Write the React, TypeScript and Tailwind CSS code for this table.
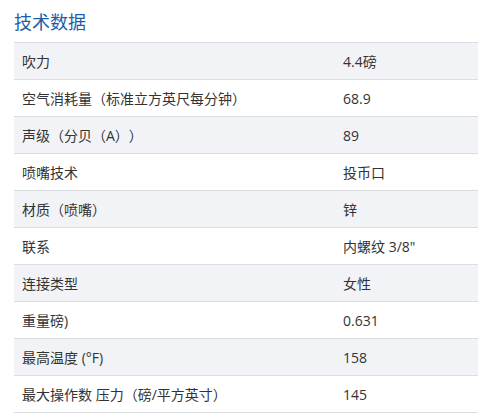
const rows: [string, string][] = [
  ["吹力", "4.4磅"],
  ["空气消耗量（标准立方英尺每分钟）", "68.9"],
  ["声级（分贝（A））", "89"],
  ["喷嘴技术", "投币口"],
  ["材质（喷嘴）", "锌"],
  ["联系", "内螺纹 3/8\""],
  ["连接类型", "女性"],
  ["重量磅)", "0.631"],
  ["最高温度 (°F)", "158"],
  ["最大操作数 压力（磅/平方英寸）", "145"],
];

export default function App() {
  return (
    <div
      className="w-[478px] h-[419px] bg-white pl-[14px] overflow-hidden [text-spacing-trim:space-all]"
      style={{ fontFamily: '"Open Sans", "Noto Sans CJK SC", sans-serif' }}
    >
      <h2 className="pt-[10px] h-[42px] text-[18px] leading-[24px] text-[#1e5ea8]">
        技术数据
      </h2>
      <div className="border-t border-[#dcdde0]">
        {rows.map(([label, value], i) => (
          <div
            key={label}
            className={`flex items-center h-[37px] border-b border-[#dcdde0] text-[14px] text-[#333] ${
              i % 2 === 0 ? "bg-[#f2f3f7]" : "bg-white"
            }`}
          >
            <div className="w-[329px] pl-2">{label}</div>
            <div>{value}</div>
          </div>
        ))}
      </div>
    </div>
  );
}
